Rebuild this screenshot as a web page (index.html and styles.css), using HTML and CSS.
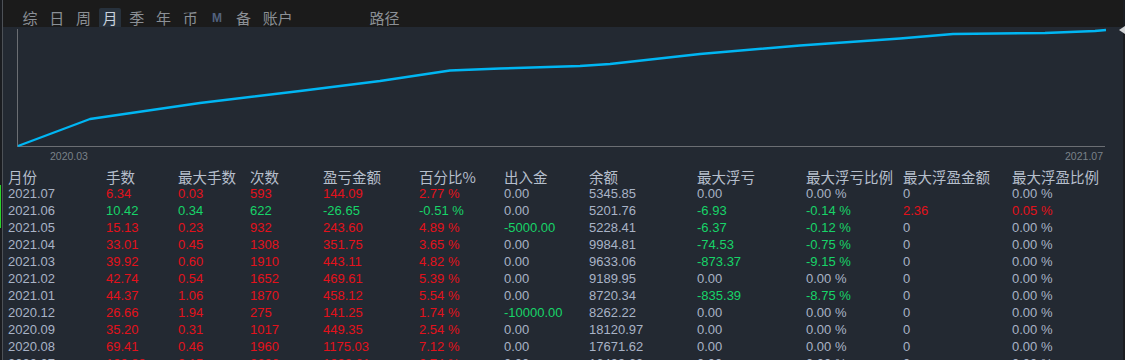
FILE: index.html
```html
<!DOCTYPE html>
<html lang="zh">
<head>
<meta charset="utf-8">
<title>月报</title>
<link rel="stylesheet" href="styles.css">
</head>
<body>
<div class="frame">
  <div class="edge-left"><span class="edge-mark"></span></div>
  <div class="main">
    <div class="topbar">
      <span class="tab">综</span>
      <span class="tab">日</span>
      <span class="tab">周</span>
      <span class="tab active">月</span>
      <span class="tab">季</span>
      <span class="tab">年</span>
      <span class="tab">币</span>
      <span class="tab tab-m">M</span>
      <span class="tab">备</span>
      <span class="tab">账户</span>
      <span class="tab path">路径</span>
    </div>
    <div class="chart">
      <svg class="chart-svg" width="1120" height="141" viewBox="3 29 1120 141">
        <line x1="17.5" y1="31" x2="17.5" y2="149" stroke="#6b6e73" stroke-width="1"/>
        <line x1="17" y1="148.5" x2="1105" y2="148.5" stroke="#6b6e73" stroke-width="1"/>
        <polyline fill="none" stroke="#00b6f3" stroke-width="2.4" stroke-linejoin="round" points="18,148 90,121 200,105 300,93 380,83 450,72.5 500,70.5 580,68 610,66 700,56 800,47.5 900,40.5 953,36 1045,35 1070,34 1095,33 1106,32"/>
        <text x="50" y="162" class="axis-label">2020.03</text>
        <text x="1103" y="162" class="axis-label" text-anchor="end">2021.07</text>
      </svg>
    </div>
    <div class="table">
      <div class="row head">
        <span>月份</span><span>手数</span><span>最大手数</span><span>次数</span><span>盈亏金额</span><span>百分比%</span><span>出入金</span><span>余额</span><span>最大浮亏</span><span>最大浮亏比例</span><span>最大浮盈金额</span><span>最大浮盈比例</span>
      </div>
      <div class="row">
        <span>2021.07</span><span class="r">6.34</span><span class="r">0.03</span><span class="r">593</span><span class="r">144.09</span><span class="r">2.77 %</span><span>0.00</span><span>5345.85</span><span>0.00</span><span>0.00 %</span><span>0</span><span>0.00 %</span>
      </div>
      <div class="row">
        <span>2021.06</span><span class="g">10.42</span><span class="g">0.34</span><span class="g">622</span><span class="g">-26.65</span><span class="g">-0.51 %</span><span>0.00</span><span>5201.76</span><span class="g">-6.93</span><span class="g">-0.14 %</span><span class="r">2.36</span><span class="r">0.05 %</span>
      </div>
      <div class="row">
        <span>2021.05</span><span class="r">15.13</span><span class="r">0.23</span><span class="r">932</span><span class="r">243.60</span><span class="r">4.89 %</span><span class="g">-5000.00</span><span>5228.41</span><span class="g">-6.37</span><span class="g">-0.12 %</span><span>0</span><span>0.00 %</span>
      </div>
      <div class="row">
        <span>2021.04</span><span class="r">33.01</span><span class="r">0.45</span><span class="r">1308</span><span class="r">351.75</span><span class="r">3.65 %</span><span>0.00</span><span>9984.81</span><span class="g">-74.53</span><span class="g">-0.75 %</span><span>0</span><span>0.00 %</span>
      </div>
      <div class="row">
        <span>2021.03</span><span class="r">39.92</span><span class="r">0.60</span><span class="r">1910</span><span class="r">443.11</span><span class="r">4.82 %</span><span>0.00</span><span>9633.06</span><span class="g">-873.37</span><span class="g">-9.15 %</span><span>0</span><span>0.00 %</span>
      </div>
      <div class="row">
        <span>2021.02</span><span class="r">42.74</span><span class="r">0.54</span><span class="r">1652</span><span class="r">469.61</span><span class="r">5.39 %</span><span>0.00</span><span>9189.95</span><span>0.00</span><span>0.00 %</span><span>0</span><span>0.00 %</span>
      </div>
      <div class="row">
        <span>2021.01</span><span class="r">44.37</span><span class="r">1.06</span><span class="r">1870</span><span class="r">458.12</span><span class="r">5.54 %</span><span>0.00</span><span>8720.34</span><span class="g">-835.39</span><span class="g">-8.75 %</span><span>0</span><span>0.00 %</span>
      </div>
      <div class="row">
        <span>2020.12</span><span class="r">26.66</span><span class="r">1.94</span><span class="r">275</span><span class="r">141.25</span><span class="r">1.74 %</span><span class="g">-10000.00</span><span>8262.22</span><span>0.00</span><span>0.00 %</span><span>0</span><span>0.00 %</span>
      </div>
      <div class="row">
        <span>2020.09</span><span class="r">35.20</span><span class="r">0.31</span><span class="r">1017</span><span class="r">449.35</span><span class="r">2.54 %</span><span>0.00</span><span>18120.97</span><span>0.00</span><span>0.00 %</span><span>0</span><span>0.00 %</span>
      </div>
      <div class="row">
        <span>2020.08</span><span class="r">69.41</span><span class="r">0.46</span><span class="r">1960</span><span class="r">1175.03</span><span class="r">7.12 %</span><span>0.00</span><span>17671.62</span><span>0.00</span><span>0.00 %</span><span>0</span><span>0.00 %</span>
      </div>
      <div class="row">
        <span>2020.07</span><span class="r">100.88</span><span class="r">2.15</span><span class="r">2606</span><span class="r">1032.61</span><span class="r">6.74 %</span><span>0.00</span><span>16499.63</span><span>0.00</span><span>0.00 %</span><span>0</span><span>0.00 %</span>
      </div>
    </div>
  </div>
  <div class="edge-right"><span class="handle"></span></div>
</div>
</body>
</html>
```
FILE: styles.css
```css
* { box-sizing: border-box; }
html, body {
  margin: 0;
  padding: 0;
  background: #232932;
  overflow: hidden;
}
body {
  width: 1125px;
  height: 360px;
  font-family: "Liberation Sans", Arial, "Noto Sans CJK SC", sans-serif;
}
.frame {
  display: flex;
  height: 360px;
}
.edge-left {
  position: relative;
  width: 3px;
  flex: none;
  background: #1a1c20;
  border-right: 1px solid #4d5157;
}
.edge-mark {
  position: absolute;
  left: 0;
  top: 185px;
  width: 1px;
  height: 43px;
  background: #2bd42b;
}
.edge-right {
  position: relative;
  width: 2px;
  flex: none;
  background: #1b1d21;
}
.handle {
  position: absolute;
  right: 0;
  top: 26px;
  width: 0;
  height: 0;
  border-top: 4px solid transparent;
  border-bottom: 4px solid transparent;
  border-right: 6px solid #d2d4d6;
}
.main {
  flex: 1;
  display: flex;
  flex-direction: column;
  min-width: 0;
}
.topbar {
  height: 29px;
  background: #1b1b1b;
  display: flex;
  align-items: center;
  gap: 4.7px;
  padding: 0 0 0 16px;
  font-family: "Noto Sans CJK SC", sans-serif;
  font-size: 15px;
  color: #8b9096;
}
.tab {
  height: 19px;
  line-height: 20px;
  padding: 0 3.5px;
  margin-top: 8px;
  min-width: 22px;
  text-align: center;
  border-radius: 2px 2px 0 0;
}
.tab.active {
  background: #27313c;
  color: #c9d2de;
}
.tab-m {
  font-family: "Liberation Sans", Arial, sans-serif;
  font-weight: bold;
  font-size: 12px;
  color: #52627d;
}
.tab.path {
  margin-left: 65px;
}
.chart {
  height: 141px;
  flex: none;
}
.chart-svg {
  display: block;
}
.axis-label {
  font-family: "Liberation Sans", Arial, sans-serif;
  font-size: 10.5px;
  fill: #7a8189;
}
.table {
  display: flex;
  flex-direction: column;
  padding-left: 5px;
}
.row {
  display: grid;
  grid-template-columns: 98px 72px 72px 73px 96px 85px 85px 108px 109px 97px 109px 1fr;
  height: 17px;
  line-height: 17px;
  font-size: 13px;
  color: #a9b3c6;
  white-space: nowrap;
}
.row.head {
  font-family: "Noto Sans CJK SC", sans-serif;
  font-size: 14.5px;
  color: #b6bfcc;
}
.r { color: #e3111b; }
.g { color: #17d468; }
```
